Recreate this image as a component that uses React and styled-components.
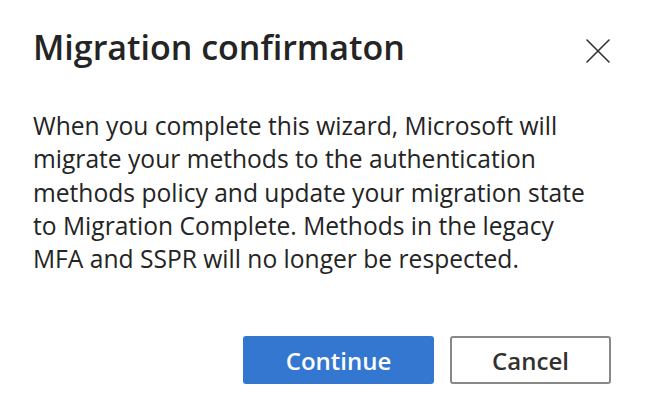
import React from 'react'
import styled, { createGlobalStyle } from 'styled-components'

const GlobalStyle = createGlobalStyle`
  html, body {
    margin: 0;
    padding: 0;
    background: #ffffff;
  }
  body {
    font-family: "Open Sans", "Noto Sans", sans-serif;
    color: #242424;
  }
`

const Dialog = styled.div`
  width: 654px;
  height: 410px;
  box-sizing: border-box;
  padding: 25px 43px 0 33px;
  background: #ffffff;
  display: flex;
  flex-direction: column;
`

const Header = styled.div`
  display: flex;
  align-items: flex-start;
  justify-content: space-between;
`

const Title = styled.h1`
  margin: 0;
  font-size: 34px;
  line-height: 44px;
  font-weight: 600;
  color: #242424;
`

const CloseButton = styled.button`
  width: 24px;
  height: 24px;
  padding: 0;
  margin: 14px 1px 0 0;
  border: none;
  background: transparent;
  display: flex;
  align-items: center;
  justify-content: center;
  cursor: pointer;
`

const Body = styled.p`
  margin: 40px 0 0;
  font-size: 24.6px;
  line-height: 33.3px;
  color: #242424;
`

const Footer = styled.div`
  margin-top: 61px;
  display: flex;
  justify-content: flex-end;
  gap: 16px;
`

const Button = styled.button`
  height: 48px;
  width: ${p => p.$width}px;
  box-sizing: border-box;
  border-radius: 3px;
  font-family: "Open Sans", "Noto Sans", sans-serif;
  font-size: 24px;
  font-weight: 600;
  cursor: pointer;
  border: ${p => (p.$primary ? 'none' : '2px solid #8a8886')};
  background: ${p => (p.$primary ? '#3477d0' : '#ffffff')};
  color: ${p => (p.$primary ? '#ffffff' : '#323130')};
`

const CloseIcon = () => (
  <svg width="24" height="24" viewBox="0 0 24 24" fill="none">
    <path d="M1 1L23 23M23 1L1 23" stroke="#323130" strokeWidth="1.6" strokeLinecap="round" />
  </svg>
)

export default function App() {
  return (
    <>
      <GlobalStyle />
      <Dialog>
        <Header>
          <Title>Migration confirmaton</Title>
          <CloseButton aria-label="Close">
            <CloseIcon />
          </CloseButton>
        </Header>
        <Body>
          When you complete this wizard, Microsoft will<br />
          migrate your methods to the authentication<br />
          methods policy and update your migration state<br />
          to Migration Complete. Methods in the legacy<br />
          MFA and SSPR will no longer be respected.
        </Body>
        <Footer>
          <Button $primary $width={191}>Continue</Button>
          <Button $width={161}>Cancel</Button>
        </Footer>
      </Dialog>
    </>
  )
}
